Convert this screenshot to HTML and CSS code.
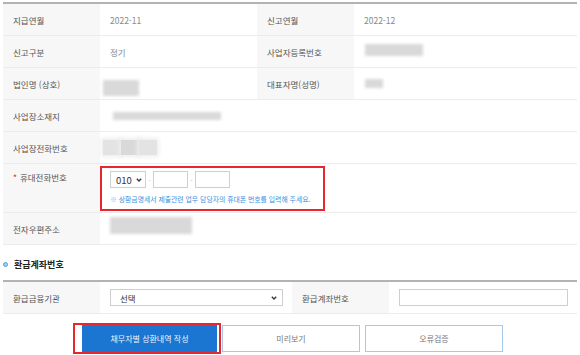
FILE: index.html
```html
<!DOCTYPE html>
<html lang="ko">
<head>
<meta charset="UTF-8">
<link rel="stylesheet" href="styles.css">
</head>
<body>

<div id="main">

	<!-- 기본 정보 -->
	<div class="info-table basic-table">

		<div class="th">지급연월</div>
		<div class="td">2022-11</div>
		<div class="th">신고연월</div>
		<div class="td">2022-12</div>

		<div class="th">신고구분</div>
		<div class="td">정기</div>
		<div class="th">사업자등록번호</div>
		<div class="td"><span class="blur blur-bizno"></span></div>

		<div class="th">법인명 (상호)</div>
		<div class="td"><span class="blur blur-corp"></span></div>
		<div class="th">대표자명(성명)</div>
		<div class="td"><span class="blur blur-ceo"></span></div>

		<div class="th">사업장소재지</div>
		<div class="td span3"><span class="blur blur-addr"></span></div>

		<div class="th">사업장전화번호</div>
		<div class="td span3"><div class="masked"><span></span><span></span><span></span></div></div>

		<div class="th th-top"><span class="req">*</span>휴대전화번호</div>
		<div class="td span3 td-phone">
			<div class="highlight">
				<div class="phone-inputs">
					<div class="select select-sm"><span>010</span>
						<svg width="6" height="4" viewBox="0 0 6 4"><path d="M0.8 0.8L3 3 5.2 0.8" fill="none" stroke="#333" stroke-width="1.3"/></svg>
					</div>
					<span class="dash">-</span>
					<div class="input input-sm"></div>
					<span class="dash">-</span>
					<div class="input input-sm"></div>
				</div>
				<p class="note"><span class="mark">※</span> 상환금명세서 제출관련 업무 담당자의 휴대폰 번호를 입력해 주세요.</p>
			</div>
		</div>

		<div class="th">전자우편주소</div>
		<div class="td span3"><span class="blur blur-mail"></span></div>

	</div>

	<h2 class="section-title"><span class="dot"></span>환급계좌번호</h2>

	<div class="info-table account-table">
		<div class="th">환급금융기관</div>
		<div class="td">
			<div class="select select-bank"><span>선택</span>
				<svg width="6" height="4" viewBox="0 0 6 4"><path d="M0.8 0.8L3 3 5.2 0.8" fill="none" stroke="#333" stroke-width="1.3"/></svg>
			</div>
		</div>
		<div class="th">환급계좌번호</div>
		<div class="td"><div class="input input-account"></div></div>
	</div>

	<div class="buttons">
		<div class="highlight-btn">
			<button class="btn btn-primary">채무자별 상환내역 작성</button>
		</div>
		<button class="btn btn-line btn-preview">미리보기</button>
		<button class="btn btn-line">오류검증</button>
	</div>

</div>

</body>
</html>
```

FILE: styles.css
```css
body, * {
	font-family: "Noto Sans CJK KR", "Noto Sans", sans-serif;
	box-sizing: border-box;
}

body, div, h2, p {
	margin: 0;
	padding: 0;
}

html, body {
	overflow: hidden;
	background: #fff;
}

#main {
	padding: 2px 3px 0;
	font-size: 8.5px;
	color: #555;
}

/* 표 */

.info-table {
	display: grid;
	grid-template-columns: 97px 157px 97px 1fr;
	grid-template-rows: 32px;
	border-top: 2px solid #b3b3b3;
}

.basic-table {
	grid-template-rows: 32px 32px 32px 32px 32px 49px 32px;
}

.th,
.td {
	display: flex;
	align-items: center;
	padding-left: 10px;
	border-bottom: 1px solid #ececec;
	white-space: nowrap;
}

.th {
	background: #f7f7f7;
	color: #555;
}

.td {
	color: #888;
	background: #fff;
}

.span3 {
	grid-column: span 3;
}

.th-top {
	align-items: flex-start;
	padding-top: 6px;
	line-height: 14px;
}

.req {
	color: #e8262b;
	margin-right: 3px;
}

/* 가려진 값 */

.blur {
	display: block;
	flex: none;
	background: #d9d9d9;
	filter: blur(1.6px);
}

.blur-bizno  { width: 58px; height: 12px; margin-left: 1px; margin-top: -4px; }
.blur-corp   { width: 36px; height: 16px; margin-left: -7px; margin-top: 8px; }
.blur-ceo    { width: 18px; height: 9px;  margin-left: 1px; }
.blur-addr   { width: 108px; height: 8px; margin-left: 3px; }
.blur-mail   { width: 82px; height: 17px; margin-top: -6px; }

/* 사업장 전화번호 (모자이크) */

.masked {
	display: flex;
	margin-left: -7px;
	height: 15px;
}

.masked span {
	display: block;
	width: 18px;
	background: #e3e3e3;
	box-shadow: 0 0 4px 2px #eeeeee;
}

.masked span:nth-child(2) {
	background: #d9d9d9;
}

/* 휴대전화 */

.td-phone {
	padding: 2px 0 0;
	align-items: flex-start;
}

.highlight {
	width: 225px;
	height: 45px;
	border: 2px solid #e8262b;
	padding: 3px 8px 0;
}

.phone-inputs {
	display: flex;
	align-items: center;
	height: 17px;
}

.select {
	display: flex;
	align-items: center;
	justify-content: space-between;
	height: 17px;
	border: 1px solid #cfcfcf;
	background: #fff;
	color: #333;
	font-size: 9px;
}

.select-sm {
	width: 36px;
	padding: 0 3px 0 5px;
	font-size: 9.5px;
}

.dash {
	width: 7px;
	text-align: center;
	color: #bbb;
	font-size: 7px;
}

.input {
	height: 17px;
	border: 1px solid #cfcfcf;
	background: #fff;
}

.input-sm {
	width: 35px;
}

.note {
	margin-top: 6px;
	line-height: 10px;
	font-size: 6.85px;
	color: #3d8fe0;
	white-space: nowrap;
}

.mark {
	color: #8fbbe8;
}

/* 환급계좌 */

.section-title {
	display: flex;
	align-items: center;
	margin: 10px 0 7px;
	height: 18px;
	font-size: 9px;
	font-weight: bold;
	color: #222;
}

.dot {
	width: 5px;
	height: 5px;
	border-radius: 50%;
	background: #9fd0f2;
	border: 1px solid #4aa3e0;
	margin: 0 6px 0 0;
}

.account-table {
	grid-template-columns: 97px 192px 97px 1fr;
}

.select-bank {
	width: 173px;
	padding: 0 5px 0 9px;
	font-size: 8.5px;
}

.input-account {
	width: 169px;
}

/* 버튼 */

.buttons {
	display: flex;
	align-items: flex-start;
	margin-top: 9px;
	padding-left: 70px;
}

.highlight-btn {
	border: 2px solid #e8262b;
	padding: 0 2px 0 7px;
}

.btn {
	height: 27px;
	font-size: 8px;
	cursor: pointer;
}

.btn-primary {
	width: 135px;
	border: none;
	background: #1a76d1;
	color: #eef4fb;
}

.btn-line {
	width: 138px;
	margin-top: 2px;
	border: 1px solid #a6c9ec;
	background: #fff;
	color: #777;
}

.btn-preview {
	margin-left: 1px;
	margin-right: 5px;
}
```
